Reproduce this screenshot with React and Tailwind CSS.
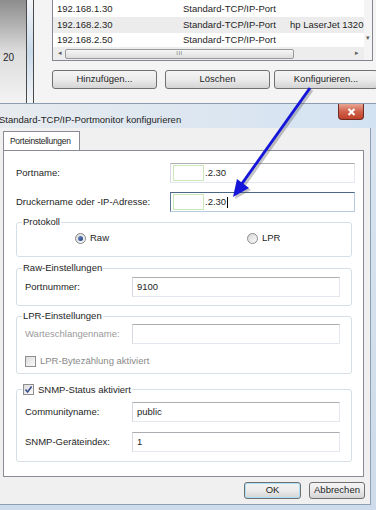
import React from 'react';

const Btn = ({ children, className = '' }) => (
  <div
    className={`flex shrink-0 items-center justify-center rounded-[3px] border border-[#707070] bg-gradient-to-b from-[#f4f4f4] via-[#ebebeb] to-[#d4d4d4] ${className}`}
  >
    {children}
  </div>
);

const TextBox = ({ children, className = '', focused = false }) => (
  <div
    className={`flex h-[20px] items-center border bg-white ${
      focused
        ? 'border-[#b7cbe0] border-l-[#5c7896] border-t-[#4a6786]'
        : 'border-[#e2e8ee] border-t-[#abadb3] border-l-[#d5d9df]'
    } ${className}`}
  >
    {children}
  </div>
);

const IpValue = ({ cursor }) => (
  <div className="flex items-center">
    <div className="ml-[1px] h-[16px] w-[31px] border border-[#cbe8b8]" />
    <span className="ml-[1px]">.2.30</span>
    {cursor && <span className="ml-[1px] h-[11px] w-px bg-black" />}
  </div>
);

const Check = ({ checked }) => (
  <div className="flex h-[11px] w-[11px] shrink-0 items-center justify-center border border-[#8f8f8f] bg-gradient-to-br from-[#dcdcdc] to-[#fbfbfb]">
    {checked && (
      <svg width="9" height="9" viewBox="0 0 9 9">
        <path d="M1.5 4.5 L3.6 7 L7.6 1.5" fill="none" stroke="#3a4f8c" strokeWidth="1.6" />
      </svg>
    )}
  </div>
);

const Radio = ({ checked }) => (
  <div className="flex h-[11px] w-[11px] shrink-0 items-center justify-center rounded-full border border-[#8a8a8a] bg-gradient-to-br from-[#d8d8d8] to-[#fbfbfb]">
    {checked && <div className="h-[5px] w-[5px] rounded-full bg-gradient-to-br from-[#6f8fc8] to-[#1f3c7a]" />}
  </div>
);

const Group = ({ legend, children, className = '' }) => (
  <fieldset className={`mx-[12px] mr-[11px] rounded-[3px] border border-[#d5dfe5] pl-[5px] pr-[11px] ${className}`}>
    <legend className="px-[1px] leading-[12px]">{legend}</legend>
    {children}
  </fieldset>
);

const FieldRow = ({ label, children, className = '', muted = false }) => (
  <div className={`flex items-center pl-[3px] ${className}`}>
    <span className={`w-[107px] shrink-0 ${muted ? 'text-[#9a9a9a]' : ''}`}>{label}</span>
    <TextBox className="flex-1 pl-[4px]">{children}</TextBox>
  </div>
);

const rows = [
  { ip: '192.168.1.30', port: 'Standard-TCP/IP-Port', printer: '', h: 'h-[17px] pt-[2px]' },
  { ip: '192.168.2.30', port: 'Standard-TCP/IP-Port', printer: 'hp LaserJet 1320 P', h: 'h-[16px] bg-[#ececec]' },
  { ip: '192.168.2.50', port: 'Standard-TCP/IP-Port', printer: '', h: 'h-[14px] pt-[1px]' },
];

export default function App() {
  return (
    <div className="relative h-[510px] w-[376px] overflow-hidden bg-[#f2f2f2] font-['Liberation_Sans',Arial,sans-serif] text-[9.5px] text-[#1e1e1e]">
      {/* background window: port list */}
      <div className="flex h-[103px]">
        <div className="w-[26px] shrink-0 bg-gradient-to-b from-[#8d8d8d] via-[#dcdcdc] to-[#f3f3f3] pl-[3px] pt-[50px] text-[10px]">
          20
        </div>
        <div className="w-px shrink-0 bg-[#4a4a4a]" />
        <div className="w-[6px] shrink-0 bg-gradient-to-b from-[#f4f6f8] via-[#c9daeb] to-[#f4f6f8]" />
        <div className="w-px shrink-0 bg-[#4a4a4a]" />
        <div className="min-w-0 flex-1 overflow-hidden bg-[#f4f4f4] pl-[18px] pr-[3px]">
          <div className="flex h-[61px] border-x border-b border-[#828790] bg-white">
            <div className="flex min-w-0 flex-1 flex-col overflow-hidden">
              {rows.map((r) => (
                <div key={r.ip} className={`flex shrink-0 items-center whitespace-nowrap pl-[4px] ${r.h}`}>
                  <span className="w-[126px] shrink-0">{r.ip}</span>
                  <span className="w-[107px] shrink-0">{r.port}</span>
                  <span>{r.printer}</span>
                </div>
              ))}
              <div className="mt-auto flex h-[13px] shrink-0 items-center bg-[#ededed] px-[2px]">
                <span className="w-[10px] text-center text-[7px] text-[#606060]">◂</span>
                <div className="flex h-[10px] w-[229px] items-center justify-center rounded-[2px] border border-[#9a9a9a] bg-gradient-to-b from-[#f6f6f6] to-[#dedede] text-[6px] tracking-[0.5px] text-[#777]">
                  III
                </div>
                <span className="ml-auto w-[10px] text-center text-[7px] text-[#606060]">▸</span>
              </div>
            </div>
            <div className="flex w-[8px] shrink-0 flex-col items-center bg-[#f4f4f4] pt-[33px] text-[7px] text-[#606060]">▾</div>
          </div>
          <div className="mt-[9px] flex">
            <Btn className="h-[19px] w-[105px]">Hinzufügen...</Btn>
            <Btn className="ml-[8px] h-[19px] w-[105px]">Löschen</Btn>
            <Btn className="ml-[4px] h-[19px] w-[104px]">Konfigurieren...</Btn>
          </div>
        </div>
      </div>

      {/* dialog */}
      <div className="flex h-[407px] flex-col border-t border-[#8c9db0] bg-gradient-to-b from-[#d9e4f0] to-[#cddbea]">
        <div className="flex h-[24px] shrink-0 items-start bg-gradient-to-r from-[#e7ebef] to-[#d3e2f2]">
          <span className="-ml-[1px] mt-[9px]">Standard-TCP/IP-Portmonitor konfigurieren</span>
          <div className="ml-auto mr-[12px] flex h-[16px] w-[26px] items-center justify-center rounded-b-[4px] border border-t-0 border-[#6d2a20] bg-gradient-to-b from-[#e8a593] via-[#d0614c] to-[#c0402a]">
            <svg width="9" height="8" viewBox="0 0 9 8">
              <path d="M1.5 1 L7.5 7 M7.5 1 L1.5 7" stroke="#fff" strokeWidth="2" />
            </svg>
          </div>
        </div>

        <div className="mb-[5px] mr-[5px] flex flex-1 flex-col border-r border-b border-[#8ea0b4] bg-[#f0f0f0]">
          <div className="flex pl-[3px] pt-[3px]">
            <div className="flex h-[19px] w-[77px] items-center whitespace-nowrap border-x border-t border-[#898c95] bg-white pl-[6px] text-[8.5px] tracking-[-0.3px]">
              Porteinstellungen
            </div>
          </div>
          <div className="ml-[3px] mr-[6px] flex h-[327px] flex-col border border-[#898c95] bg-white pt-[12px]">
            <div className="flex items-center pl-[12px] pr-[8px]">
              <span className="w-[154px] shrink-0">Portname:</span>
              <TextBox className="flex-1 pl-[1px]">
                <IpValue />
              </TextBox>
            </div>
            <div className="mt-[9px] flex items-center pl-[12px] pr-[8px]">
              <span className="w-[154px] shrink-0">Druckername oder -IP-Adresse:</span>
              <TextBox focused className="flex-1 pl-[1px]">
                <IpValue cursor />
              </TextBox>
            </div>

            <Group legend="Protokoll" className="mt-[4px] pb-[11px]">
              <div className="mt-[4px] flex h-[13px] items-center">
                <div className="ml-[53px] flex w-[172px] items-center gap-[4px]">
                  <Radio checked />
                  <span>Raw</span>
                </div>
                <div className="flex items-center gap-[4px]">
                  <Radio />
                  <span>LPR</span>
                </div>
              </div>
            </Group>

            <Group legend="Raw-Einstellungen" className="mt-[5px] pb-[8px]">
              <FieldRow label="Portnummer:" className="mt-[3px]">9100</FieldRow>
            </Group>

            <Group legend="LPR-Einstellungen" className="mt-[4px] pb-[5px]">
              <FieldRow label="Warteschlangenname:" muted className="mt-[2px]" />
              <div className="mt-[11px] flex h-[13px] items-center gap-[4px] pl-[3px] text-[#8a8a8a]">
                <Check />
                <span>LPR-Bytezählung aktiviert</span>
              </div>
            </Group>

            <Group
              legend={
                <span className="flex items-center gap-[4px] leading-[13px]">
                  <Check checked />
                  SNMP-Status aktiviert
                </span>
              }
              className="mt-[9px] pb-[9px]"
            >
              <FieldRow label="Communityname:" className="mt-[6px]">public</FieldRow>
              <FieldRow label="SNMP-Geräteindex:" className="mt-[10px]">1</FieldRow>
            </Group>
          </div>

          <div className="flex flex-1 items-center justify-end gap-[8px] pr-[5px]">
            <Btn className="h-[17px] w-[57px] border-[#3c7fb1] shadow-[inset_0_0_0_1px_#a8e1f8]">OK</Btn>
            <Btn className="h-[17px] w-[56px]">Abbrechen</Btn>
          </div>
        </div>
      </div>

      {/* annotation arrow */}
      <svg className="pointer-events-none absolute left-0 top-0" width="376" height="510">
        <g opacity="0.35" transform="translate(2 2)">
          <line x1="310" y1="88" x2="241" y2="185" stroke="#555" strokeWidth="3" />
          <polygon points="233,197 237,179 249,188" fill="#555" />
        </g>
        <line x1="310" y1="88" x2="241" y2="185" stroke="#1616d8" strokeWidth="3" />
        <polygon points="233,197 237,179 249,188" fill="#1616d8" />
      </svg>
    </div>
  );
}
